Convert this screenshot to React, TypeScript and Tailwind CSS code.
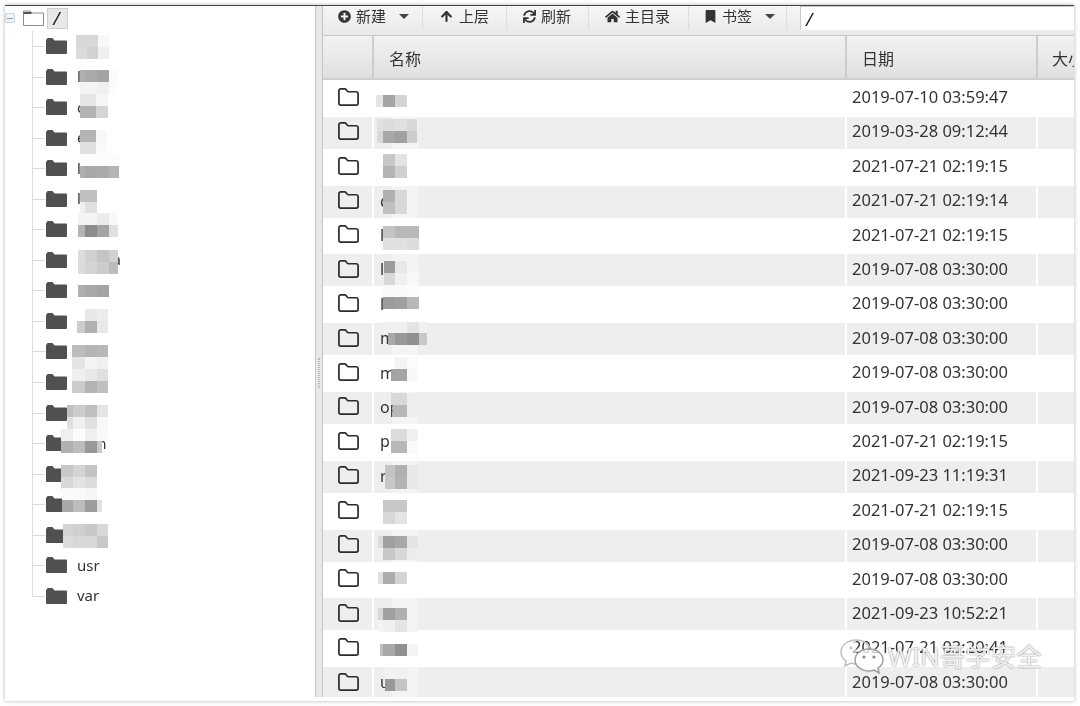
import { ArrowUp, Folder } from "lucide-react";
import { FaBookmark, FaHome, FaPlusCircle, FaSync } from "react-icons/fa";

const SANS = "font-['Noto_Sans','Noto_Sans_CJK_SC',sans-serif]";

type Tile = [number, number, number[]];

// Mosaic pixelation that hides file names: [x, y, [width, grey, width, grey, ...]]
const TILES: Tile[] = [
  // tree
  [76, 35, [11, 0xd8, 11, 0xd8, 11, 0xf8]],
  [76, 47, [11, 0xdc, 11, 0xd2, 11, 0xf0]],
  [80, 70, [5, 0xb0, 12, 0xaa, 12, 0xa4, 8, 0xfa]],
  [80, 82, [5, 0xf4, 12, 0xf4, 12, 0xf0, 8, 0xfc]],
  [80, 94, [16, 0xe6, 12, 0xf6]],
  [80, 106, [16, 0xb4, 12, 0xd4]],
  [80, 130, [16, 0xb4, 11, 0xf8]],
  [80, 142, [16, 0xe0, 11, 0xfa]],
  [80, 154, [13, 0xfc, 13, 0xfc, 13, 0xfc]],
  [80, 166, [5, 0xb0, 12, 0xa8, 12, 0xaa, 10, 0xb4]],
  [80, 190, [17, 0xc0]],
  [80, 202, [5, 0xf0, 12, 0xe0]],
  [78, 213, [7, 0xf4, 12, 0xf4, 12, 0xec, 9, 0xf8]],
  [78, 225, [7, 0xb4, 12, 0x8c, 12, 0xa4, 9, 0xe0]],
  [78, 250, [7, 0xdc, 12, 0xd0, 12, 0xc4, 9, 0xd0]],
  [78, 262, [7, 0xdc, 12, 0xd4, 12, 0xcc, 9, 0xbc]],
  [78, 285, [7, 0xb0, 12, 0xa8, 12, 0xa4]],
  [85, 309, [12, 0xe8, 11, 0xec]],
  [77, 321, [8, 0xcc, 12, 0xb0, 11, 0xe8]],
  [72, 345, [13, 0xbc, 12, 0xb4, 11, 0xb8]],
  [72, 357, [13, 0xe4, 12, 0xf4, 11, 0xf0]],
  [72, 369, [13, 0xf0, 12, 0xe8, 11, 0xe0]],
  [72, 381, [13, 0xcc, 12, 0xb4, 11, 0xc0]],
  [67, 405, [6, 0xc0, 12, 0xcc, 12, 0xc0, 11, 0xe4]],
  [67, 417, [6, 0xe0, 12, 0xf0, 12, 0xe0, 11, 0xf8]],
  [61, 429, [12, 0xf0, 12, 0xfc, 12, 0xf0, 11, 0xfa]],
  [61, 441, [12, 0xb0, 12, 0xbc, 12, 0x98, 5, 0xc8]],
  [61, 465, [12, 0xc8, 12, 0xd4, 12, 0xc4]],
  [61, 477, [12, 0xd8, 12, 0xe4, 12, 0xdc]],
  [62, 488, [11, 0xfa, 12, 0xfa, 12, 0xf6]],
  [62, 500, [11, 0xa8, 12, 0xbc, 12, 0x9c, 5, 0xe0]],
  [63, 524, [10, 0xd4, 12, 0xd0, 12, 0xc8, 11, 0xd8]],
  [63, 536, [10, 0xdc, 12, 0xd8, 12, 0xd8, 11, 0xc8]],
  // table
  [376, 95, [7, 0xe4, 12, 0xa4, 12, 0xd4]],
  [377, 119, [6, 0xe0, 12, 0xdc, 12, 0xe0, 10, 0xd8]],
  [377, 131, [6, 0xd8, 12, 0xa8, 12, 0xa0, 10, 0xcc]],
  [383, 154, [12, 0xc8, 12, 0xe4]],
  [383, 166, [12, 0xb4, 12, 0xd0]],
  [383, 190, [12, 0xb0, 12, 0xd8]],
  [383, 202, [12, 0xc0, 12, 0xd8]],
  [383, 226, [12, 0xc4, 12, 0xb8, 12, 0xb8]],
  [383, 238, [12, 0xe0, 12, 0xe0, 12, 0xdc]],
  [384, 261, [11, 0x9c, 12, 0xe8, 12, 0xf4]],
  [384, 273, [11, 0xd8, 12, 0xf0, 12, 0xf8]],
  [383, 285, [12, 0xfa, 12, 0xfa, 12, 0xfc]],
  [383, 297, [12, 0x9c, 12, 0xa0, 12, 0xb8]],
  [383, 322, [12, 0xf0, 12, 0xf0, 12, 0xe4, 8, 0xf2]],
  [388, 333, [7, 0xa8, 12, 0x98, 12, 0x90, 8, 0xc8]],
  [395, 357, [12, 0xf4, 11, 0xfc]],
  [391, 369, [16, 0xa4, 11, 0xf8]],
  [391, 393, [16, 0xd8, 11, 0xee]],
  [393, 405, [14, 0xb8, 11, 0xee]],
  [391, 429, [16, 0xdc, 11, 0xf0]],
  [391, 441, [16, 0xb8, 11, 0xfa]],
  [385, 465, [10, 0xc4, 12, 0xb0, 11, 0xe8]],
  [385, 477, [10, 0xc8, 12, 0xb4, 11, 0xe8]],
  [383, 500, [12, 0xc8, 12, 0xc8]],
  [383, 512, [12, 0xd8, 12, 0xe4]],
  [378, 536, [5, 0xdc, 12, 0xa0, 12, 0xa8, 11, 0xe4]],
  [378, 548, [5, 0xf0, 12, 0xc8, 12, 0xd8, 11, 0xec]],
  [378, 572, [5, 0xe0, 12, 0xac, 12, 0xd4]],
  [378, 608, [5, 0xd8, 12, 0xa0, 12, 0xb0]],
  [378, 620, [5, 0xf4, 12, 0xf0, 12, 0xe4, 11, 0xf4]],
  [380, 644, [3, 0xc0, 12, 0xa8, 12, 0x90, 11, 0xf4]],
  [385, 667, [10, 0xf2, 12, 0xf0]],
  [385, 679, [10, 0x98, 12, 0xc4]],
];

const TREE = ["", "l", "c", "e", "l", "l", "l", "media", "r", "", "", "", "", "sbin", "", "", "", "usr", "var"];

const ROWS: [string, string][] = [
  ["", "2019-07-10 03:59:47"],
  ["", "2019-03-28 09:12:44"],
  ["", "2021-07-21 02:19:15"],
  ["d", "2021-07-21 02:19:14"],
  ["l", "2021-07-21 02:19:15"],
  ["l", "2019-07-08 03:30:00"],
  ["l", "2019-07-08 03:30:00"],
  ["m", "2019-07-08 03:30:00"],
  ["m", "2019-07-08 03:30:00"],
  ["op", "2019-07-08 03:30:00"],
  ["pr", "2021-07-21 02:19:15"],
  ["r", "2021-09-23 11:19:31"],
  ["", "2021-07-21 02:19:15"],
  ["", "2019-07-08 03:30:00"],
  ["", "2019-07-08 03:30:00"],
  ["", "2021-09-23 10:52:21"],
  ["", "2021-07-21 03:20:41"],
  ["u", "2019-07-08 03:30:00"],
];

function DarkFolder() {
  return (
    <svg width="21" height="16" viewBox="0 0 21 16" className="shrink-0">
      <path d="M0.5 1.5 L1.5 0 H6.5 L8.5 2.5 H20 Q21 2.5 21 3.5 V15 Q21 16 20 16 H1 Q0 16 0 15 V2 Z" fill="#505050" />
    </svg>
  );
}

function Caret() {
  return <span className="h-0 w-0 border-x-[5px] border-t-[5px] border-x-transparent border-t-[#444]" />;
}

function TreeRow({ name, last }: { name: string; last: boolean }) {
  return (
    <div className="relative flex h-[30.55px] items-center pl-[41px]">
      <span className={`absolute left-[27px] top-0 w-px bg-[#dcdcdc] ${last ? "h-1/2" : "h-full"}`} />
      <span className="absolute left-[27px] top-1/2 h-px w-[13px] bg-[#dcdcdc]" />
      <DarkFolder />
      <span className="ml-[10px] text-[15px] leading-none text-[#333]">{name}</span>
    </div>
  );
}

function ToolButton({ width, pad, children }: { width: string; pad: string; children: React.ReactNode }) {
  return (
    <div className={`flex h-[24px] shrink-0 items-center border-r border-[#d6e0e6] pb-[3px] ${width} ${pad}`}>{children}</div>
  );
}

export default function App() {
  return (
    <div className={`relative h-[706px] w-[1080px] overflow-hidden bg-white pl-[5px] pt-[5px] blur-[0.6px] ${SANS}`}>
      <div className="flex h-[696px] w-[1068.5px] border-t-[1.5px] border-[#444] bg-white shadow-[0_0_4px_rgba(0,0,0,0.3)]">
        {/* tree panel */}
        <aside className="w-[310px] shrink-0">
          <div className="flex h-[24.7px] items-center">
            <span className="flex h-[10px] w-[10px] items-center justify-center rounded-[2px] border border-[#c5d3de] bg-[#eef3f7]">
              <span className="h-px w-[6px] bg-[#8aa0b0]" />
            </span>
            <svg width="21" height="16" viewBox="0 0 21 16" className="ml-[8px] shrink-0">
              <path d="M0.5 15.5 V1 H7 L8.5 3 H20.5 V15.5 Z" fill="none" stroke="#8c8c8c" />
              <path d="M0.5 3 H8.5" stroke="#555" strokeWidth="2" />
            </svg>
            <span className="ml-[3px] flex h-[21px] w-[21px] items-center justify-center border border-[#cfcfcf] bg-[#e8e8e8] pr-[2px] text-[18px] italic leading-none text-[#222]">
              /
            </span>
          </div>
          {TREE.map((name, i) => (
            <TreeRow key={i} name={name} last={i === TREE.length - 1} />
          ))}
        </aside>

        {/* splitter */}
        <div className="flex h-[691px] w-[8px] shrink-0 items-center border-x border-[#c4c4c4] bg-[#e8e8e8]">
          <span className="ml-[2px] mt-[42px] h-[30px] w-[2px] border-x border-dotted border-[#b8b8b8]" />
        </div>

        {/* file panel */}
        <main className="flex h-[691px] min-w-0 flex-1 flex-col overflow-hidden">
          <div className="flex h-[30px] shrink-0 items-start border-b border-[#c8c8c8] bg-gradient-to-b from-[#f6f6f6] to-[#e9e9e9] text-[15px] leading-none text-[#333]">
            <ToolButton width="w-[100px]" pad="pl-[15px]">
              <FaPlusCircle className="size-[13px]" />
              <span className="ml-[5px]">新建</span>
              <span className="ml-[13px] flex"><Caret /></span>
            </ToolButton>
            <ToolButton width="w-[84px]" pad="pl-[16px]">
              <ArrowUp className="size-[15px]" strokeWidth={3.4} />
              <span className="ml-[5px]">上层</span>
            </ToolButton>
            <ToolButton width="w-[82px]" pad="pl-[16px]">
              <FaSync className="size-[13px]" />
              <span className="ml-[5px]">刷新</span>
            </ToolButton>
            <ToolButton width="w-[100px]" pad="pl-[16px]">
              <FaHome className="size-[15px]" />
              <span className="ml-[5px]">主目录</span>
            </ToolButton>
            <ToolButton width="w-[98px]" pad="pl-[15px]">
              <FaBookmark className="size-[13px]" />
              <span className="ml-[5px]">书签</span>
              <span className="ml-[13px] flex"><Caret /></span>
            </ToolButton>
            <div className="ml-[13px] flex h-[24px] min-w-0 flex-1 items-center border-l border-t border-[#c8c8c8] bg-white pl-[5px] text-[18px] italic leading-none text-[#222]">
              /
            </div>
          </div>

          <div className="flex h-[44px] shrink-0 border-b-2 border-[#cfcfcf] bg-gradient-to-b from-[#f2f2f2] to-[#e0e0e0] pt-0 text-[16px] leading-none text-[#333]">
            <div className="w-[51px] shrink-0 border-r-2 border-[#cdcdcd]" />
            <div className="flex w-[473px] shrink-0 items-center border-r-2 border-[#cdcdcd] pl-[15px] pt-[4px]">名称</div>
            <div className="flex w-[191px] shrink-0 items-center border-r-2 border-[#cdcdcd] pl-[15px] pt-[4px]">日期</div>
            <div className="flex min-w-0 flex-1 items-center overflow-hidden whitespace-nowrap pl-[14px] pt-[4px]">大小</div>
          </div>

          <div className="min-h-0 flex-1">
            {ROWS.map(([name, date], i) => (
              <div
                key={i}
                className={`flex items-center text-[#333] ${i % 2 === 0 ? "h-[36.8px] bg-white" : "h-[32px] bg-[#eeeeee]"}`}
              >
                <div className="flex h-full w-[51px] shrink-0 items-center border-r-2 border-white pb-[2px] pl-[14px]">
                  <Folder className="size-[23px] text-[#2c2c2c]" strokeWidth={1.8} />
                </div>
                <div className="flex h-full w-[473px] shrink-0 items-center border-r-2 border-white pb-[2px] pl-[6px] text-[16px]">
                  {name}
                </div>
                <div className="flex h-full w-[191px] shrink-0 items-center whitespace-nowrap border-r-2 border-white pb-[2px] pl-[5px] text-[16.5px]">
                  {date}
                </div>
                <div className="h-full min-w-0 flex-1" />
              </div>
            ))}
          </div>
        </main>
      </div>

      {/* smudge left by the mosaic on the striped rows */}
      <div className="absolute left-[392px] top-[116px] h-[581px] w-[26px] bg-white/35" />

      {/* mosaic over the file names */}
      {TILES.map(([x, y, cells], i) => (
        <div key={i} className="absolute flex h-[12px]" style={{ left: x, top: y }}>
          {cells.map((v, j) =>
            j % 2 === 0 ? (
              <span
                key={j}
                className="h-full"
                style={{ width: v, background: `rgb(${cells[j + 1]},${cells[j + 1]},${cells[j + 1]})` }}
              />
            ) : null
          )}
        </div>
      ))}

      {/* watermark */}
      <div className="absolute left-[840px] top-[639px] flex items-center">
        <svg width="44" height="36" viewBox="0 0 44 36" fill="none">
          <path d="M16 1 C7 1 1 7 1 13 C1 17 3 20 6 22 L5 27 L11 24 C13 25 15 25 17 25" fill="#ffffff" fillOpacity="0.6" stroke="#c0c0c0" strokeWidth="1.5" />
          <path d="M16 1 C24 1 30 6 31 11" stroke="#c0c0c0" strokeWidth="1.5" />
          <path d="M29 10 C21 10 15 15 15 21 C15 27 21 32 29 32 C31 32 33 32 34 31 L39 34 L38 29 C41 27 43 24 43 21 C43 15 37 10 29 10 Z" fill="#ffffff" fillOpacity="0.75" stroke="#a0a0a0" strokeWidth="1.5" />
          <circle cx="24" cy="18" r="1.6" fill="#888" />
          <circle cx="34" cy="18" r="1.6" fill="#888" />
          <circle cx="11" cy="9" r="1.4" fill="#bbb" />
        </svg>
        <span className="ml-[4px] whitespace-nowrap text-[25.5px] leading-none text-white/90 [text-shadow:0_0_1.5px_#555]">
          WIN哥学安全
        </span>
      </div>
    </div>
  );
}
